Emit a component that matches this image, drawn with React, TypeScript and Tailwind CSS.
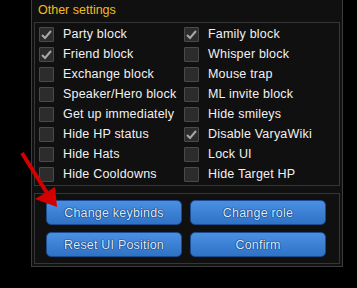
import React from "react";

const left = [
  { label: "Party block", on: true },
  { label: "Friend block", on: true },
  { label: "Exchange block", on: false },
  { label: "Speaker/Hero block", on: false },
  { label: "Get up immediately", on: false },
  { label: "Hide HP status", on: false },
  { label: "Hide Hats", on: false },
  { label: "Hide Cooldowns", on: false },
];

const right = [
  { label: "Family block", on: true },
  { label: "Whisper block", on: false },
  { label: "Mouse trap", on: false },
  { label: "ML invite block", on: false },
  { label: "Hide smileys", on: false },
  { label: "Disable VaryaWiki", on: true },
  { label: "Lock UI", on: false },
  { label: "Hide Target HP", on: false },
];

const Check = ({ label, on }: { label: string; on: boolean }) => (
  <div className="flex h-[20px] items-start">
    <div className="flex h-[15px] w-[15px] items-center justify-center rounded-[1px] border border-[#4a4a4a] bg-[#2c2c2c]">
      {on && (
        <svg width="11" height="10" viewBox="0 0 11 10">
          <path d="M1 5 L4 8 L10 1" fill="none" stroke="#a8a8a8" strokeWidth="2" />
        </svg>
      )}
    </div>
    <span className="ml-[9px] -mt-[1px] text-[12.5px] leading-[16px] tracking-[0.2px] text-[#f2f2f2]">{label}</span>
  </div>
);

const Btn = ({ children }: { children: React.ReactNode }) => (
  <button className="h-[25px] w-[136px] rounded-[5px] border border-[#1d4b8f] bg-gradient-to-b from-[#4a90e2] to-[#2f72c6] text-[12.5px] leading-[22px] tracking-[0.2px] text-[#dcefff] [text-shadow:0_0_1px_#0b2f74,0_0_1px_#0b2f74,0_0_1px_#0b2f74]">
    {children}
  </button>
);

export default function App() {
  return (
    <div className="relative h-[288px] w-[357px] overflow-hidden bg-black font-['Liberation_Sans',sans-serif]">
      <div className="ml-[31px] h-[267px] w-[312px] border-x border-b border-[#3c3c3c] bg-[#101010] px-[2px]">
        <div className="h-[22px] pl-[4px] pt-[1px] text-[12.5px] leading-[18px] text-[#f4bc1c]">Other settings</div>
        <div className="h-[164px] border border-[#363636] pl-[4px] pt-[4px]">
          <div className="grid grid-cols-[145px_1fr]">
            <div>
              {left.map((c) => (
                <Check key={c.label} {...c} />
              ))}
            </div>
            <div>
              {right.map((c) => (
                <Check key={c.label} {...c} />
              ))}
            </div>
          </div>
        </div>
        <div className="mt-[7px] flex h-[71px] flex-col gap-[7px] border border-[#363636] pl-[11px] pt-[6px]">
          <div className="flex gap-[8px]">
            <Btn>Change keybinds</Btn>
            <Btn>Change role</Btn>
          </div>
          <div className="flex gap-[8px]">
            <Btn>Reset UI Position</Btn>
            <Btn>Confirm</Btn>
          </div>
        </div>
      </div>
      <svg className="absolute left-0 top-0" width="357" height="288">
        <line x1="22" y1="153" x2="47" y2="193" stroke="#d40000" strokeWidth="4" />
        <polygon points="57,207 35,199 55,187" fill="#d40000" />
      </svg>
    </div>
  );
}
